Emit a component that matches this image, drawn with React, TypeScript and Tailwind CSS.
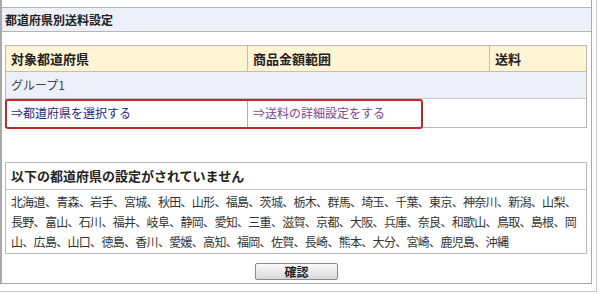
import React from 'react';

const font = { fontFamily: '"Noto Sans CJK JP", "Liberation Sans", sans-serif' };

const prefLines = [
    '北海道、青森、岩手、宮城、秋田、山形、福島、茨城、栃木、群馬、埼玉、千葉、東京、神奈川、新潟、山梨、',
    '長野、富山、石川、福井、岐阜、静岡、愛知、三重、滋賀、京都、大阪、兵庫、奈良、和歌山、鳥取、島根、岡',
    '山、広島、山口、徳島、香川、愛媛、高知、福岡、佐賀、長崎、熊本、大分、宮崎、鹿児島、沖縄',
];

export default function App() {
    return (
        <div className="w-[600px] h-[294px] bg-white overflow-hidden text-[#333]" style={font}>
            <div className="w-[597px] h-[292px] border-r border-b border-[#c8c8c8]">
                <div className="w-[592px] h-[284px] border-l-2 border-r border-b border-[#a9a9a9] flex flex-col">
                    <div className="h-[7px]" />
                    {/* section title */}
                    <div className="h-[25px] border-y border-[#b4b4b4] bg-[#edf0f8] flex items-center pl-[3px] text-[12px] font-bold text-[#222]">
                        都道府県別送料設定
                    </div>

                    <div className="pl-[3px] pt-[13px]">
                        {/* group table */}
                        <div className="relative w-[582px] border border-[#b8b8b8] text-[12px]">
                            <div className="flex h-[26px] bg-[#fff5d4] border-b border-[#c9bf9e] font-bold text-[13px] text-[#222]">
                                <div className="w-[242px] border-r border-[#c9bf9e] flex items-center pl-[5px]">対象都道府県</div>
                                <div className="w-[242px] border-r border-[#c9bf9e] flex items-center pl-[5px]">商品金額範囲</div>
                                <div className="flex-1 flex items-center pl-[5px]">送料</div>
                            </div>
                            <div className="h-[27px] bg-[#edf0f8] border-b border-[#c4c4c4] flex items-center pl-[5px] text-[#444]">
                                グループ1
                            </div>
                            <div className="flex h-[28px]">
                                <div className="w-[242px] border-r border-[#b9a9c4] flex items-center pl-[5px] text-[#1f2a86]">⇒都道府県を選択する</div>
                                <div className="flex-1 flex items-center pl-[5px] text-[#7d4590]">⇒送料の詳細設定をする</div>
                            </div>
                            {/* highlight annotation */}
                            <div className="absolute left-[-1px] top-[53px] w-[418px] h-[30px] border-2 border-[#c3262c] rounded-[3px] pointer-events-none" />
                        </div>

                        {/* unset prefectures */}
                        <div className="mt-[34px] w-[582px] border border-[#b8b8b8]">
                            <div className="h-[27px] border-b border-[#c4c4c4] flex items-center pl-[5px] text-[13px] font-bold text-[#222]">
                                以下の都道府県の設定がされていません
                            </div>
                            <div className="pl-[5px] pt-[2px] pb-[1px] text-[12px] leading-[20px] tracking-[-0.7px] text-[#333] whitespace-nowrap">
                                {prefLines.map((line) => (
                                    <div key={line}>{line}</div>
                                ))}
                            </div>
                        </div>
                    </div>

                    <div className="flex justify-center pt-[9px]">
                        <button className="w-[83px] h-[17px] border border-[#8a8a8a] rounded-[2px] bg-gradient-to-b from-[#fafafa] to-[#d9d9d9] text-[12px] font-bold text-[#222] leading-none flex items-center justify-center">
                            確認
                        </button>
                    </div>
                </div>
            </div>
        </div>
    );
}
